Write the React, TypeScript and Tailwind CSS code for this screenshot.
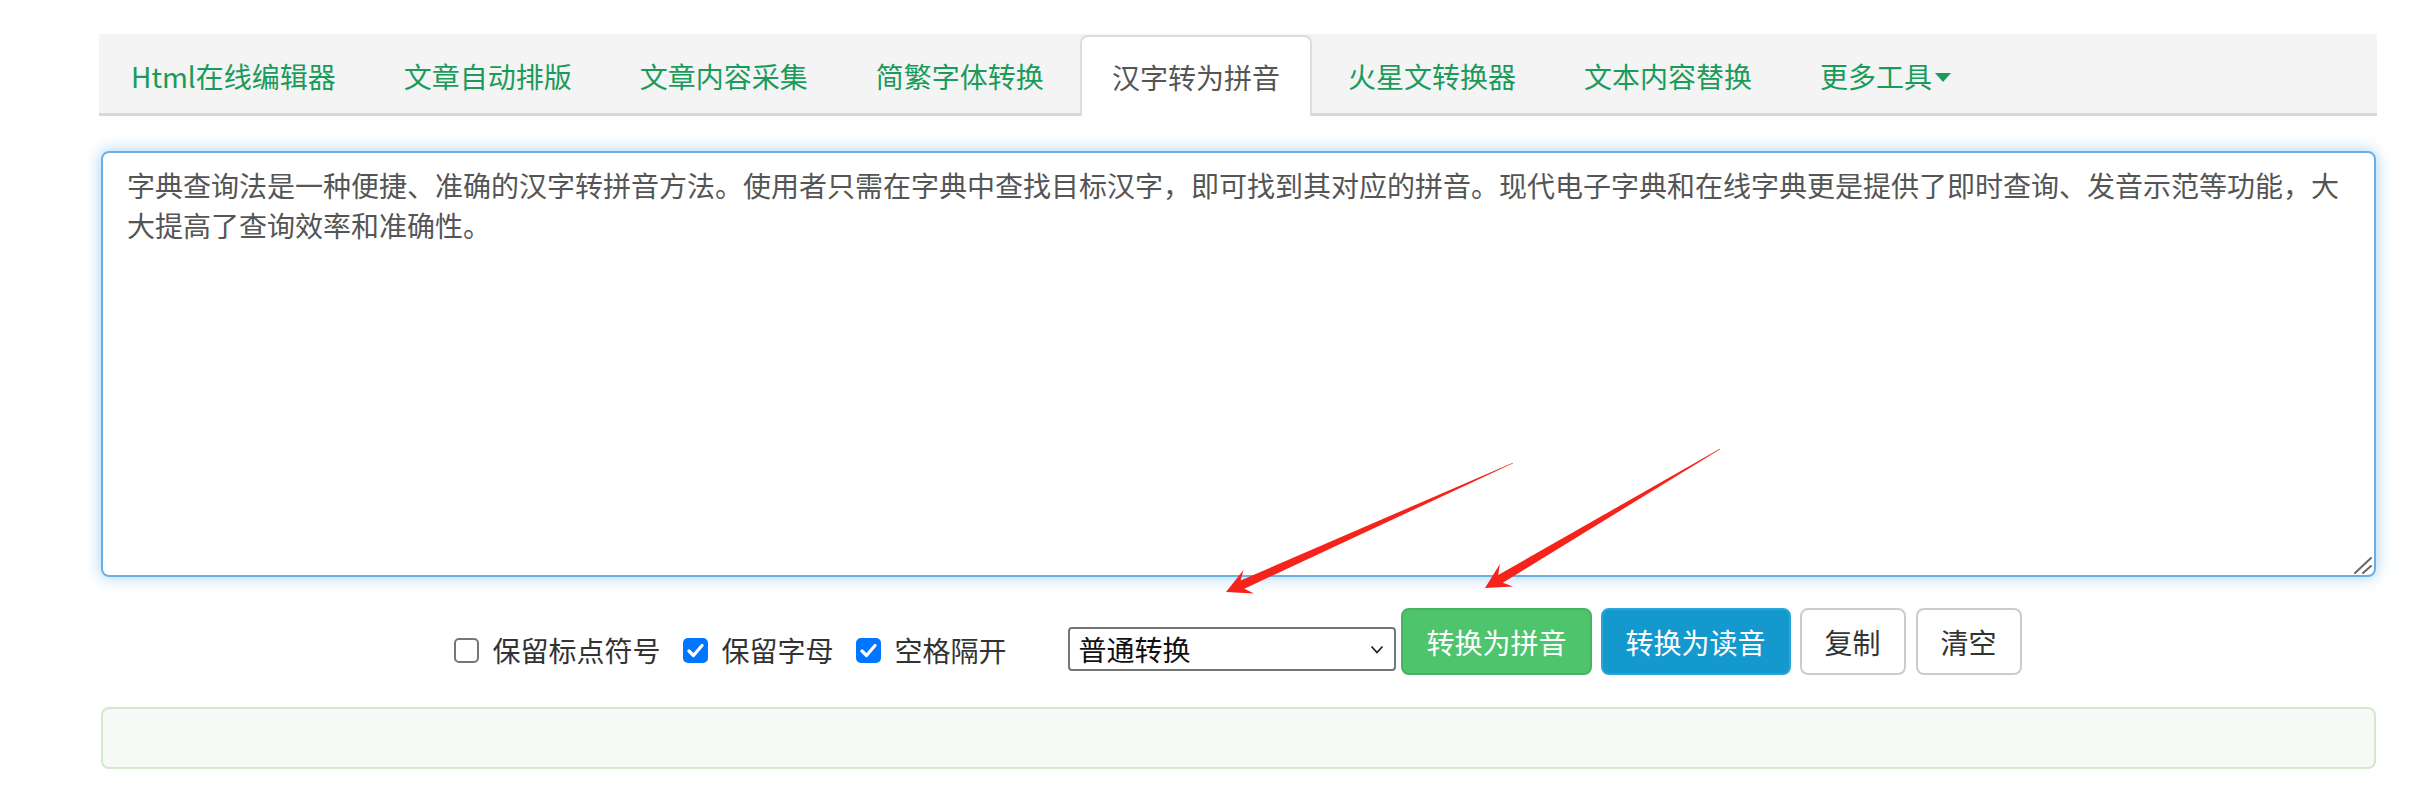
import React from 'react'

const tabs = ['Html在线编辑器', '文章自动排版', '文章内容采集', '简繁字体转换', '汉字转为拼音', '火星文转换器', '文本内容替换']

const sourceText =
  '字典查询法是一种便捷、准确的汉字转拼音方法。使用者只需在字典中查找目标汉字，即可找到其对应的拼音。现代电子字典和在线字典更是提供了即时查询、发音示范等功能，大大提高了查询效率和准确性。'

// tapered annotation arrow, tail -> tip
function arrowPoints(x1: number, y1: number, x2: number, y2: number) {
  const dx = x2 - x1
  const dy = y2 - y1
  const len = Math.hypot(dx, dy)
  const ux = dx / len
  const uy = dy / len
  const nx = -uy
  const ny = ux
  const p = (d: number, w: number) => `${(x1 + ux * d + nx * w).toFixed(1)},${(y1 + uy * d + ny * w).toFixed(1)}`
  return [p(0, 0.3), p(len - 18, 4.5), p(len - 25, 13), p(len, 0), p(len - 25, -13), p(len - 18, -4.5), p(0, -0.3)].join(' ')
}

function Checkbox({ checked, label }: { checked: boolean; label: string }) {
  return (
    <label className="flex items-center gap-[13px] mt-[22px] h-[40px] text-[28px] leading-[40px] text-[#333]">
      {checked ? (
        <span className="w-[25px] h-[25px] rounded-[5px] bg-[#0075ff] flex items-center justify-center">
          <svg width="17" height="15" viewBox="0 0 17 15">
            <path d="M2 8 L6.5 12.5 L15 2.5" fill="none" stroke="#fff" strokeWidth="3.2" strokeLinecap="round" strokeLinejoin="round" />
          </svg>
        </span>
      ) : (
        <span className="w-[25px] h-[25px] rounded-[5px] border-2 border-[#767676] bg-white" />
      )}
      <span>{label}</span>
    </label>
  )
}

export default function App() {
  return (
    <div className="relative w-[2413px] h-[785px] bg-white pt-[34px] font-['Noto_Sans_CJK_SC','Noto_Sans',sans-serif]">
      <div className="ml-[99px] w-[2278px]">
        {/* tabs */}
        <ul className="flex items-end h-[82px] bg-[#f4f4f4] border-b-[3px] border-[#d8d8d8]">
          {tabs.map((t) => {
            const active = t === '汉字转为拼音'
            return (
              <li
                key={t}
                className={
                  active
                    ? 'h-[81px] -mb-[3px] mr-[4px] px-[30px] flex items-center border-2 border-b-0 border-[#dcdcdc] rounded-t-[8px] bg-white text-[28px] text-[#555]'
                    : 'h-[81px] -mb-[3px] mr-[4px] px-[30px] flex items-center border-2 border-transparent text-[28px] text-[#1a9b5b]'
                }
              >
                {t}
              </li>
            )
          })}
          <li className="h-[81px] -mb-[3px] px-[30px] flex items-center border-2 border-transparent text-[28px] text-[#1a9b5b]">
            更多工具
            <span className="ml-[3px] mt-[4px] w-0 h-0 border-x-[8px] border-x-transparent border-t-[9px] border-t-[#1a9b5b]" />
          </li>
        </ul>

        {/* input */}
        <div className="relative mt-[35px] ml-[2px] w-[2275px]">
          <textarea
            className="block w-full h-[426px] resize-none rounded-[8px] border-2 border-[#66afe9] px-[24px] py-[12px] text-[28px] leading-[40px] text-[#555] outline-none shadow-[0_0_16px_rgba(102,175,233,0.6)] font-['Noto_Sans_CJK_SC',sans-serif]"
            defaultValue={sourceText}
          />
          <svg className="absolute right-[2px] bottom-[2px]" width="20" height="20" viewBox="0 0 20 20">
            <path d="M1 18 L17 3 M9 18 L17 11" stroke="#666" strokeWidth="2" strokeLinecap="round" />
          </svg>
        </div>

        {/* controls */}
        <div className="flex items-start justify-center mt-[31px] h-[67px]">
          <Checkbox checked={false} label="保留标点符号" />
          <div className="w-[23px]" />
          <Checkbox checked label="保留字母" />
          <div className="w-[23px]" />
          <Checkbox checked label="空格隔开" />
          <div className="ml-[62px] mt-[19px] w-[328px] h-[44px] border-2 border-[#767676] rounded-[4px] bg-white flex items-center justify-between pl-[8px] pr-[10px] text-[28px] text-[#111]">
            <span>普通转换</span>
            <svg width="14" height="9" viewBox="0 0 14 9">
              <path d="M1.5 1.5 L7 7.5 L12.5 1.5" fill="none" stroke="#222" strokeWidth="1.8" />
            </svg>
          </div>
          <button className="ml-[5px] h-[67px] px-[23px] border-2 border-[#47b262] bg-[#4ec46c] text-white text-[28px] leading-[40px] rounded-[8px]">
            转换为拼音
          </button>
          <button className="ml-[9px] h-[67px] px-[23px] border-2 border-[#2ba5d6] bg-[#1399ce] text-white text-[28px] leading-[40px] rounded-[8px]">
            转换为读音
          </button>
          <button className="ml-[9px] h-[67px] px-[23px] border-2 border-[#cccccc] bg-white text-[#333] text-[28px] leading-[40px] rounded-[8px]">
            复制
          </button>
          <button className="ml-[10px] h-[67px] px-[23px] border-2 border-[#cccccc] bg-white text-[#333] text-[28px] leading-[40px] rounded-[8px]">
            清空
          </button>
        </div>

        {/* result */}
        <div className="mt-[32px] ml-[2px] w-[2275px] h-[62px] rounded-[8px] border-2 border-[#d6e9c6] bg-[#f6f9f6]" />
      </div>

      {/* annotation arrows */}
      <svg className="absolute left-0 top-0 pointer-events-none" width="2413" height="785">
        <polygon points={arrowPoints(1513, 463, 1226, 592)} fill="#f5231b" />
        <polygon points={arrowPoints(1720, 449, 1485, 588)} fill="#f5231b" />
      </svg>
    </div>
  )
}
